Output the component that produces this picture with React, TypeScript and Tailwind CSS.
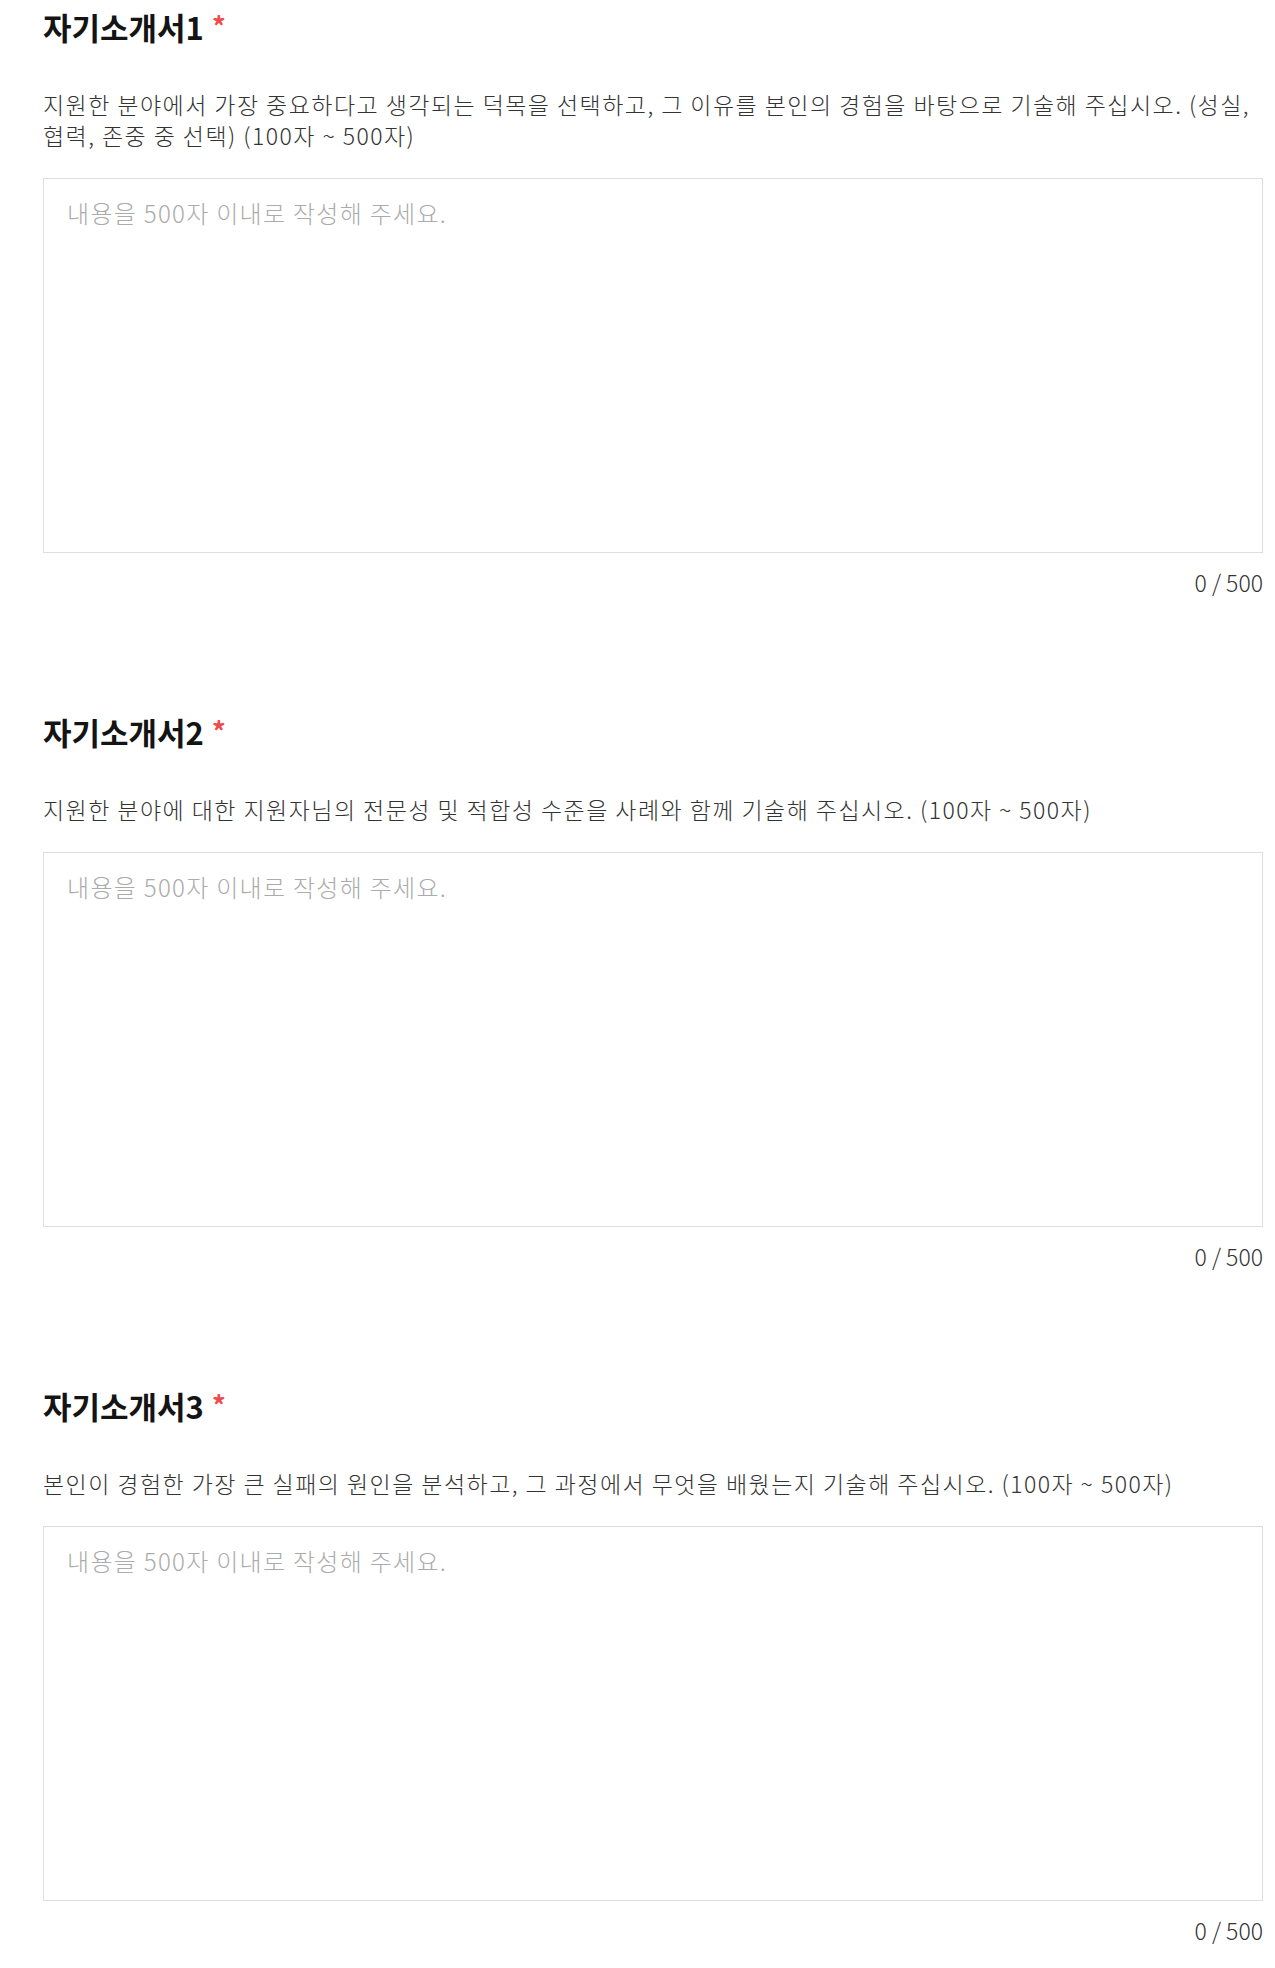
import React from "react";

const sections: { title: string; desc: React.ReactNode }[] = [
  {
    title: "자기소개서1",
    desc: (
      <>
        지원한 분야에서 가장 중요하다고 생각되는 덕목을 선택하고, 그 이유를 본인의 경험을 바탕으로 기술해 주십시오. (성실,
        <br />
        협력, 존중 중 선택) (100자 ~ 500자)
      </>
    ),
  },
  {
    title: "자기소개서2",
    desc: "지원한 분야에 대한 지원자님의 전문성 및 적합성 수준을 사례와 함께 기술해 주십시오. (100자 ~ 500자)",
  },
  {
    title: "자기소개서3",
    desc: "본인이 경험한 가장 큰 실패의 원인을 분석하고, 그 과정에서 무엇을 배웠는지 기술해 주십시오. (100자 ~ 500자)",
  },
];

export default function App() {
  return (
    <div
      className="w-[1275px] bg-white pl-[43px] pr-[12px] pt-[7px] pb-[25px]"
      style={{ fontFamily: '"Noto Sans CJK KR", "Noto Sans", sans-serif' }}
    >
      {sections.map((s, i) => (
        <section key={i} className={i === 0 ? "" : "mt-[115px]"}>
          <h2 className="flex items-start h-[40px] text-[31px] leading-[40px] font-bold text-[#141414]">
            <span>{s.title}</span>
            <span className="ml-[8px] text-[27px] leading-[38px] font-bold text-[#ef4b4b]">*</span>
          </h2>
          <p className="mt-[42px] whitespace-nowrap text-[23px] leading-[31px] font-light text-[#333333] tracking-[1.45px]">
            {s.desc}
          </p>
          <textarea
            className="mt-[27px] block w-full h-[375px] resize-none border border-[#dedede] bg-white px-[23px] pt-[18px] text-[24px] leading-[32px] font-light text-[#333333] tracking-[1.3px] outline-none placeholder:text-[#ababab]"
            placeholder="내용을 500자 이내로 작성해 주세요."
          />
          <div className="mt-[14px] text-right text-[23px] leading-[30px] font-light text-[#333333]">
            0 / 500
          </div>
        </section>
      ))}
    </div>
  );
}
